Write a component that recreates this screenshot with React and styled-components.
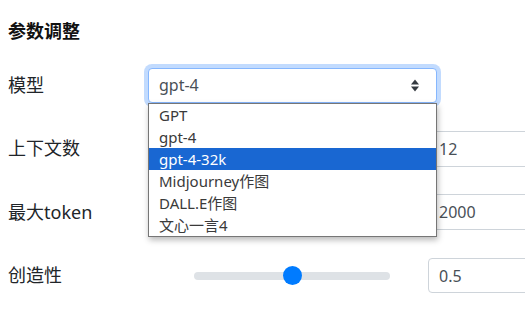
import React from "react";
import styled, { createGlobalStyle } from "styled-components";

const GlobalStyle = createGlobalStyle`
  html, body {
    margin: 0;
    padding: 0;
    background: #ffffff;
    overflow: hidden;
  }
  body {
    font-family: "Noto Sans", "Noto Sans CJK SC", sans-serif;
    color: #212529;
  }
`;

const Panel = styled.div`
  padding: 18px 0 0 8px;
  height: 297px;
  overflow: hidden;
`;

const Title = styled.h5`
  margin: 0 0 22px;
  font-size: 18px;
  line-height: 27px;
  font-weight: 700;
  color: #111;
`;

const Form = styled.div`
  display: grid;
  grid-template-columns: 140px 280px 1fr;
  grid-auto-rows: 36px;
  row-gap: 27.5px;
  align-items: center;
`;

const Label = styled.label`
  font-size: 18px;
  line-height: 27px;
  color: #212529;
`;

const SelectWrap = styled.div`
  position: relative;
  grid-column: 2 / 4;
  width: 289px;
`;

const SelectBox = styled.div`
  box-sizing: border-box;
  height: 35px;
  display: flex;
  align-items: center;
  justify-content: space-between;
  padding: 0 17px 0 10px;
  border: 1px solid #86b7fe;
  border-radius: 4px;
  box-shadow: 0 0 0 4px rgba(13, 110, 253, 0.25);
  background: #fff;
  font-size: 16px;
  color: #495057;
`;

const Menu = styled.ul`
  position: absolute;
  top: 100%;
  left: 0;
  z-index: 5;
  box-sizing: border-box;
  width: 289px;
  margin: 0;
  padding: 0;
  list-style: none;
  background: #fff;
  border: 1px solid #767676;
  box-shadow: 1px 3px 6px rgba(0, 0, 0, 0.28);
`;

const Option = styled.li`
  height: 22px;
  line-height: 22px;
  padding-left: 10px;
  font-size: 15px;
  color: ${(p) => (p.$active ? "#fff" : "#3a3a3a")};
  background: ${(p) => (p.$active ? "#1967d2" : "transparent")};
  white-space: nowrap;
`;

const SliderCell = styled.div`
  padding-left: 46px;
  display: flex;
  align-items: center;
`;

const Range = styled.input.attrs({ type: "range" })`
  -webkit-appearance: none;
  appearance: none;
  width: 196px;
  height: 20px;
  margin: 0;
  background: transparent;

  &::-webkit-slider-runnable-track {
    height: 8px;
    border-radius: 4px;
    background: #dee2e6;
  }
  &::-webkit-slider-thumb {
    -webkit-appearance: none;
    appearance: none;
    width: 19px;
    height: 19px;
    margin-top: -5.5px;
    border: none;
    border-radius: 50%;
    background: #007bff;
  }
`;

// the number boxes run on past the right edge of the window
const NumberInput = styled.input`
  box-sizing: border-box;
  width: calc(100% + 20px);
  height: ${(p) => p.$h || 36}px;
  padding: 0 10px;
  border: 1px solid #ced4da;
  border-radius: 4px;
  font-family: "Noto Sans", sans-serif;
  font-size: 16px;
  color: #495057;
  background: #fff;
  outline: none;
`;

const Arrows = () => (
  <svg width="8" height="13" viewBox="0 0 8 13">
    <polygon points="0,5.5 4,0.5 8,5.5" fill="#343a40" />
    <polygon points="0,7.5 8,7.5 4,12.5" fill="#343a40" />
  </svg>
);

const models = ["GPT", "gpt-4", "gpt-4-32k", "Midjourney作图", "DALL.E作图", "文心一言4"];

const sliders = [
  { label: "上下文数", min: 0, max: 32, step: 1, value: 12 },
  { label: "最大token", min: 0, max: 8000, step: 100, value: 2000 },
  { label: "创造性", min: 0, max: 1, step: 0.1, value: 0.5, h: 35 },
];

export default function App() {
  return (
    <>
      <GlobalStyle />
      <Panel>
        <Title>参数调整</Title>
        <Form>
          <Label>模型</Label>
          <SelectWrap>
            <SelectBox>
              <span>gpt-4</span>
              <Arrows />
            </SelectBox>
            <Menu>
              {models.map((m) => (
                <Option key={m} $active={m === "gpt-4-32k"}>
                  {m}
                </Option>
              ))}
            </Menu>
          </SelectWrap>
          {sliders.map((s) => (
            <React.Fragment key={s.label}>
              <Label>{s.label}</Label>
              <SliderCell>
                <Range min={s.min} max={s.max} step={s.step} defaultValue={s.value} />
              </SliderCell>
              <NumberInput $h={s.h} defaultValue={s.value} />
            </React.Fragment>
          ))}
        </Form>
      </Panel>
    </>
  );
}
